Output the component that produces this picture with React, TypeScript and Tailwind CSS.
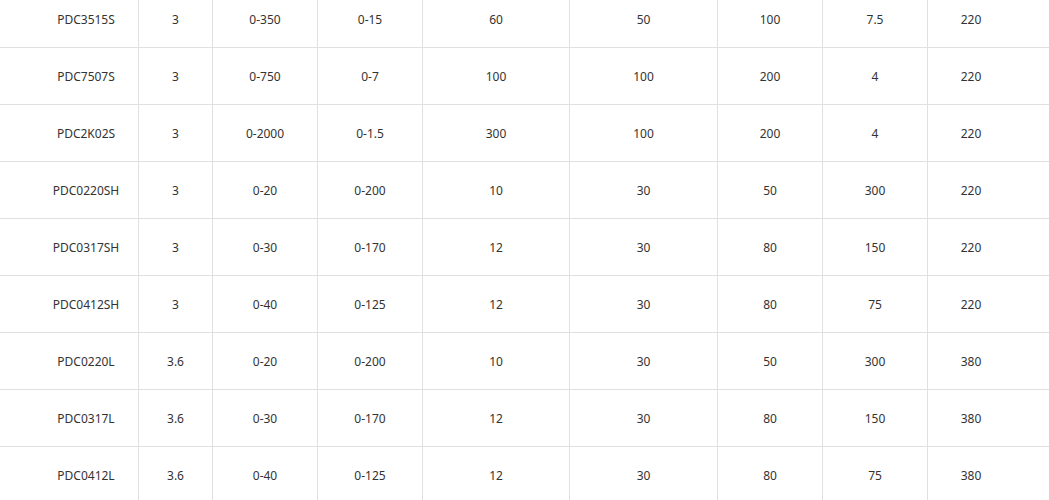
const rows: string[][] = [
  ["PDC3515S", "3", "0-350", "0-15", "60", "50", "100", "7.5", "220"],
  ["PDC7507S", "3", "0-750", "0-7", "100", "100", "200", "4", "220"],
  ["PDC2K02S", "3", "0-2000", "0-1.5", "300", "100", "200", "4", "220"],
  ["PDC0220SH", "3", "0-20", "0-200", "10", "30", "50", "300", "220"],
  ["PDC0317SH", "3", "0-30", "0-170", "12", "30", "80", "150", "220"],
  ["PDC0412SH", "3", "0-40", "0-125", "12", "30", "80", "75", "220"],
  ["PDC0220L", "3.6", "0-20", "0-200", "10", "30", "50", "300", "380"],
  ["PDC0317L", "3.6", "0-30", "0-170", "12", "30", "80", "150", "380"],
  ["PDC0412L", "3.6", "0-40", "0-125", "12", "30", "80", "75", "380"],
];

export default function App() {
  return (
    <div
      className="w-[1049px] h-[500px] overflow-hidden bg-white text-[12px] text-[#333]"
      style={{ fontFamily: '"Noto Sans", "Open Sans", sans-serif' }}
    >
      <div className="-mt-[9px]">
        {rows.map((row, i) => (
          <div key={i} className="w-full border-b border-[#e0e0e0]">
            <div className="ml-[34px] grid grid-cols-[105px_74px_105px_105px_147px_148px_105px_105px_86px]">
              {row.map((cell, j) => (
                <div
                  key={j}
                  className={`h-[56px] pt-[2px] flex items-center justify-center border-[#e0e0e0] ${
                    j < 8 ? "border-r" : ""
                  }`}
                >
                  {cell}
                </div>
              ))}
            </div>
          </div>
        ))}
      </div>
    </div>
  );
}
